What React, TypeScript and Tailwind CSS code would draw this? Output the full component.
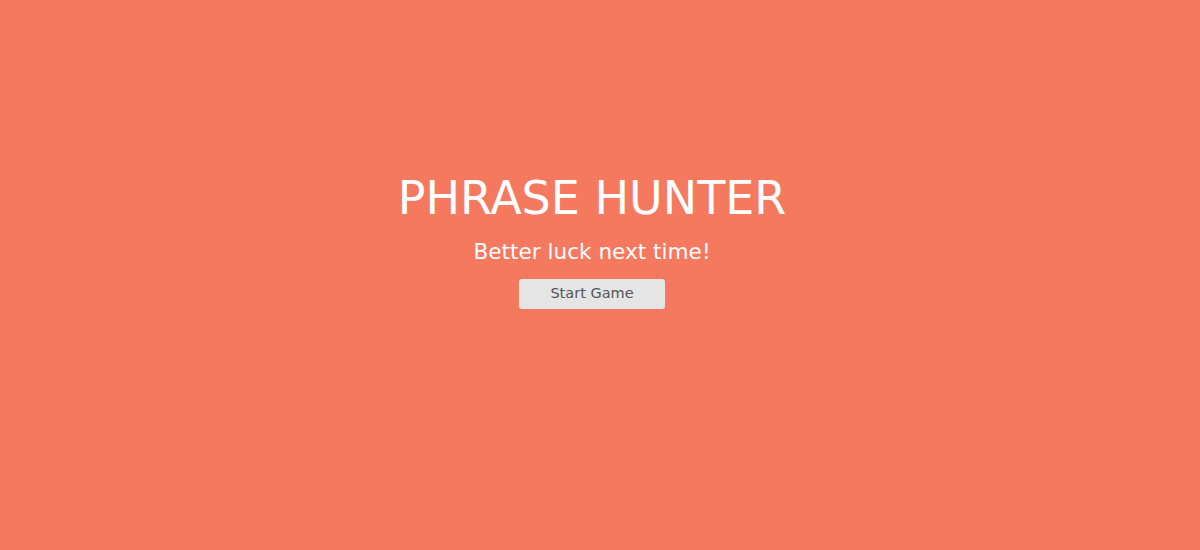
export default function App() {
  return (
    <div className="h-[550px] w-full bg-[#f5795f] flex flex-col items-center pt-[174px] pr-[16px] font-['DejaVu_Sans',sans-serif] text-white">
      <h1 className="text-[46px] leading-[48px] font-normal">PHRASE HUNTER</h1>
      <p className="mt-[15px] text-[21.6px] leading-[30px]">Better luck next time!</p>
      <button className="mt-[12px] w-[146px] h-[30px] rounded-[3px] bg-[#e5e5e5] text-[#555] text-[14.5px]">
        Start Game
      </button>
    </div>
  );
}
